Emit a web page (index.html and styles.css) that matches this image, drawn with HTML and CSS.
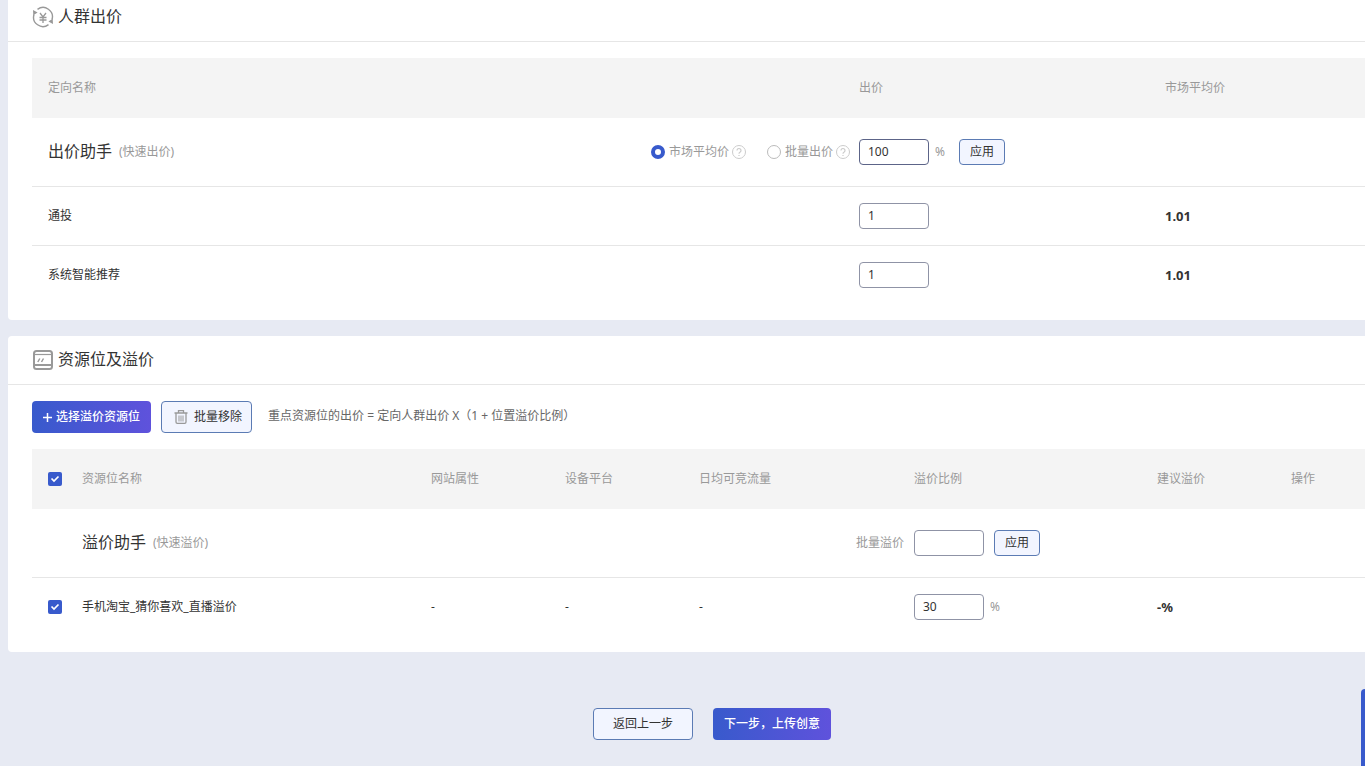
FILE: index.html
```html
<!DOCTYPE html>
<html lang="zh-CN">
<head>
<meta charset="utf-8">
<title>人群出价</title>
<link rel="stylesheet" href="styles.css">
</head>
<body>
<svg class="sprite" aria-hidden="true">
  <symbol id="help" viewBox="0 0 14 14">
    <circle cx="7" cy="7" r="6.5" fill="none" stroke="currentColor"/>
    <path d="M5 5.500a2 2 0 1 1 3.200 1.600C7.400 7.600 7 7.900 7 8.800M7 9.900v1.200" fill="none" stroke="currentColor" stroke-width="1.200"/>
  </symbol>
</svg>
<main class="page">
  <section class="card">
    <header class="card-header">
      <svg class="card-icon" viewBox="0 0 22 22" fill="none" stroke="currentColor" stroke-width="1.400">
        <path d="M5.500 3.400A9.300 9.300 0 0 1 20 13.500M16.500 18.600A9.300 9.300 0 0 1 2 8.500"/>
        <path d="M1 4l0.300 5.300L5.600 6.500zM21 18l-0.300-5.300L16.400 15.500z" fill="currentColor" stroke="none"/>
        <path d="M8 7l3 4 3-4M11 11v6M7.500 11.500h7M7.500 14h7" stroke-width="1.300"/>
      </svg>
      <h2 class="card-title">人群出价</h2>
    </header>
    <div class="card-body">
      <table class="table">
        <colgroup><col><col class="col-bid"><col class="col-market"></colgroup>
        <thead>
          <tr><th>定向名称</th><th>出价</th><th>市场平均价</th></tr>
        </thead>
        <tbody>
          <tr class="helper-row">
            <td>
              <div class="helper">
                <div class="helper-name"><span class="helper-title">出价助手</span><span class="helper-note">(快速出价)</span></div>
                <div class="options">
                  <div class="option">
                    <input class="radio" type="radio" name="mode" id="mode-market" checked>
                    <label for="mode-market">市场平均价</label>
                    <svg class="help"><use href="#help"/></svg>
                  </div>
                  <div class="option">
                    <input class="radio" type="radio" name="mode" id="mode-batch">
                    <label for="mode-batch">批量出价</label>
                    <svg class="help"><use href="#help"/></svg>
                  </div>
                </div>
              </div>
            </td>
            <td>
              <div class="field">
                <input class="input input-active" type="text" value="100" aria-label="出价比例">
                <span class="unit">%</span>
                <button class="btn btn-small btn-after-unit" type="button">应用</button>
              </div>
            </td>
            <td></td>
          </tr>
          <tr>
            <td>通投</td>
            <td><div class="field"><input class="input" type="text" value="1" aria-label="通投出价"></div></td>
            <td class="strong">1.01</td>
          </tr>
          <tr>
            <td>系统智能推荐</td>
            <td><div class="field"><input class="input" type="text" value="1" aria-label="系统智能推荐出价"></div></td>
            <td class="strong">1.01</td>
          </tr>
        </tbody>
      </table>
    </div>
  </section>

  <section class="card">
    <header class="card-header">
      <svg class="card-icon" viewBox="0 0 22 22" fill="none" stroke="currentColor">
        <rect x="2" y="2" width="18" height="18" rx="2.500" stroke-width="2"/>
        <path d="M2 5.500h18" stroke-width="1.200"/>
        <path d="M2 16h18" stroke-width="2"/>
        <path d="M7.800 9.500l-2 3.500M11.500 9.500l-2 3.500" stroke-width="1.500"/>
      </svg>
      <h2 class="card-title">资源位及溢价</h2>
    </header>
    <div class="card-body">
      <div class="toolbar">
        <button class="btn btn-primary" type="button">
          <svg class="plus" viewBox="0 0 9 9"><path d="M4.500 0v9M0 4.500h9" stroke="currentColor" stroke-width="1.500"/></svg>
          选择溢价资源位
        </button>
        <button class="btn btn-remove" type="button">
          <svg class="trash" viewBox="0 0 14 14" fill="none" stroke="currentColor">
            <path d="M4.500 2.500v-1.800h5v1.800M0.500 3h13M2 3.500v8.500q0 1.300 1.300 1.300h7.400q1.300 0 1.300-1.300V3.500" stroke-width="1.300"/>
            <path d="M5 5.500v6M7 5.500v6M9 5.500v6" stroke-width="1"/>
          </svg>
          批量移除
        </button>
        <p class="formula">重点资源位的出价 = 定向人群出价 X（1 + 位置溢价比例）</p>
      </div>
      <table class="table">
        <colgroup><col class="col-check"><col><col class="col-attr"><col class="col-attr"><col class="col-traffic"><col class="col-ratio"><col class="col-attr"><col class="col-action"></colgroup>
        <thead>
          <tr>
            <th><input class="checkbox" type="checkbox" aria-label="全选" checked></th>
            <th>资源位名称</th><th>网站属性</th><th>设备平台</th><th>日均可竞流量</th><th>溢价比例</th><th>建议溢价</th><th>操作</th>
          </tr>
        </thead>
        <tbody>
          <tr class="helper-row">
            <td></td>
            <td><div class="helper-name"><span class="helper-title">溢价助手</span><span class="helper-note">(快速溢价)</span></div></td>
            <td></td>
            <td></td>
            <td class="label-cell"><label for="batch-ratio">批量溢价</label></td>
            <td>
              <div class="field">
                <input class="input" type="text" id="batch-ratio">
                <button class="btn btn-small" type="button">应用</button>
              </div>
            </td>
            <td></td>
            <td></td>
          </tr>
          <tr>
            <td><input class="checkbox" type="checkbox" aria-label="选择手机淘宝_猜你喜欢_直播溢价" checked></td>
            <td>手机淘宝_猜你喜欢_直播溢价</td>
            <td>-</td>
            <td>-</td>
            <td>-</td>
            <td><div class="field"><input class="input" type="text" value="30" aria-label="溢价比例"><span class="unit">%</span></div></td>
            <td class="strong">-%</td>
            <td></td>
          </tr>
        </tbody>
      </table>
    </div>
  </section>

  <footer class="actions">
    <button class="btn btn-back" type="button">返回上一步</button>
    <button class="btn btn-primary" type="button">下一步，上传创意</button>
  </footer>
</main>
<aside class="side-tab"></aside>
</body>
</html>
```

FILE: styles.css
```css
* {
  box-sizing: border-box;
}

body {
  margin: 0;
  background: #e7eaf3;
  color: #333;
  font: 12px/18px "Noto Sans", "Noto Sans CJK SC", sans-serif;
}

button,
input {
  margin: 0;
  font: inherit;
}

.sprite {
  position: absolute;
  width: 0;
  height: 0;
}

.page {
  display: flex;
  flex-direction: column;
  gap: 16px;
  margin-top: -7px;
  padding-left: 8px;
}

.card {
  background: #fff;
  border-radius: 4px 0 0 4px;
}

.card-header {
  display: flex;
  align-items: center;
  gap: 4px;
  height: 49px;
  padding-left: 24px;
  border-bottom: 1px solid #e6e6e6;
}

.card-icon {
  width: 22px;
  height: 22px;
  color: #999;
}

.card-title {
  margin: 0;
  padding-bottom: 2px;
  font-size: 16px;
  font-weight: 400;
  line-height: 24px;
}

.card-body {
  padding: 16px 0 16px 24px;
}

.table {
  width: 100%;
  table-layout: fixed;
  border-collapse: separate;
  border-spacing: 0;
}

.col-bid { width: 306px; }
.col-market { width: 208px; }
.col-check { width: 42px; }
.col-attr { width: 134px; }
.col-traffic { width: 215px; }
.col-ratio { width: 243px; }
.col-action { width: 82px; }

th,
td {
  padding: 0 0 0 8px;
  text-align: left;
  vertical-align: middle;
}

th:first-child,
td:first-child {
  padding-left: 16px;
}

th {
  height: 60px;
  background: #f4f4f4;
  color: #999;
  font-weight: 400;
}

td {
  height: 59px;
  border-bottom: 1px solid #e6e6e6;
}

.helper-row td {
  height: 69px;
}

tbody tr:last-child td {
  height: 58px;
  border-bottom: 0;
}

.strong {
  font-size: 13px;
  font-weight: 700;
}

.helper {
  display: flex;
  align-items: center;
  justify-content: space-between;
}

.helper-name {
  display: flex;
  align-items: center;
  gap: 7px;
}

.helper-title {
  padding-bottom: 2px;
  font-size: 16px;
  line-height: 24px;
}

.helper-note,
.options,
.label-cell,
.unit {
  color: #999;
}

.options {
  display: flex;
  gap: 21px;
  padding-right: 1px;
}

.option {
  display: flex;
  align-items: center;
  gap: 4px;
}

.option label {
  margin-right: -1px;
}

.help {
  width: 14px;
  height: 14px;
  color: #ccc;
}

.radio {
  appearance: none;
  width: 14px;
  height: 14px;
  border: 1px solid #bbb;
  border-radius: 50%;
  background: #fff;
}

.radio:checked {
  border: 4px solid #385acc;
}

.checkbox {
  appearance: none;
  display: block;
  width: 14px;
  height: 14px;
  border-radius: 2px;
  background: #385acc url("data:image/svg+xml,%3Csvg xmlns='http://www.w3.org/2000/svg' viewBox='0 0 14 14'%3E%3Cpath d='M3.500 6.500L6 9l4.500-4.500' fill='none' stroke='%23fff' stroke-width='1.700'/%3E%3C/svg%3E");
}

.label-cell {
  padding-right: 2px;
  text-align: right;
}

.field {
  display: flex;
  align-items: center;
}

.input {
  width: 70px;
  height: 26px;
  padding: 0 8px 2px;
  border: 1px solid #8f93a6;
  border-radius: 4px;
  background: #fff;
  color: #333;
}

.input-active {
  border-color: #5c6488;
}

.unit {
  margin-left: 6px;
}

.btn {
  display: flex;
  align-items: center;
  justify-content: center;
  height: 32px;
  border: 1px solid #5b7bb4;
  border-radius: 4px;
  background: #f2f5ff;
  color: #333;
  padding: 0 10px;
  white-space: nowrap;
}

.btn-small {
  width: 46px;
  height: 26px;
  margin-left: 10px;
}

.btn-after-unit {
  margin-left: 14px;
}

.btn-primary {
  gap: 4px;
  padding: 0 11px;
  border: 0;
  background: linear-gradient(90deg, #385acc, #5f52dc);
  color: #fff;
  font-weight: 500;
}

.btn-remove {
  gap: 6px;
  padding: 0 9px 0 12px;
}

.btn-back {
  width: 100px;
}

.plus {
  width: 9px;
  height: 9px;
}

.trash {
  width: 14px;
  height: 14px;
  color: #999;
}

.toolbar {
  display: flex;
  gap: 10px;
  margin-bottom: 16px;
}

.formula {
  margin: 6px 0 0 6px;
  color: #666;
}

.actions {
  display: flex;
  justify-content: center;
  gap: 20px;
  padding: 40px 0 20px 51px;
}

.side-tab {
  position: fixed;
  right: 0;
  bottom: 0;
  width: 4px;
  height: 77px;
  border-radius: 4px 0 0 0;
  background: #385acc;
}
```
